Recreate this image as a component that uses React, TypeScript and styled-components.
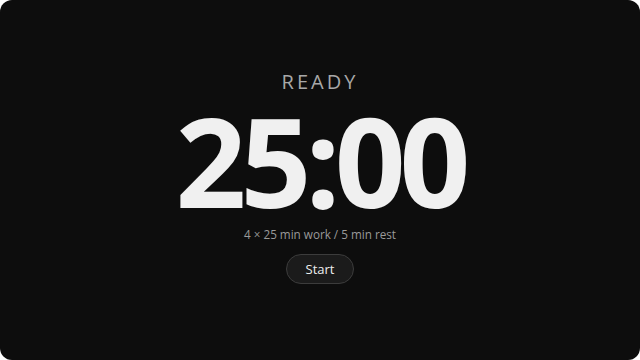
import React from "react";
import styled, { createGlobalStyle } from "styled-components";

const Global = createGlobalStyle`
  html, body { margin: 0; padding: 0; background: #ffffff; }
  #root { width: 640px; height: 360px; }
`;

const Frame = styled.div`
  width: 640px;
  height: 360px;
  background: #0d0d0d;
  border-radius: 12px;
  display: flex;
  flex-direction: column;
  align-items: center;
  justify-content: center;
  font-family: "Open Sans", "Liberation Sans", sans-serif;
  box-sizing: border-box;
  padding-bottom: 8px;
`;

const Status = styled.div`
  font-size: 20px;
  letter-spacing: 3px;
  color: #a8a8a8;
  line-height: 28px;
`;

const Clock = styled.div`
  font-size: 124px;
  font-weight: 700;
  color: #f0f0f0;
  line-height: 124px;
  letter-spacing: -6px;
  margin-top: 2px;
`;

const Plan = styled.div`
  font-size: 11.7px;
  color: #9a9a9a;
  margin-top: 3px;
  line-height: 18px;
`;

const Button = styled.button`
  margin-top: 11px;
  height: 30px;
  padding: 0 19px;
  border-radius: 15px;
  border: 1px solid #3c3c3c;
  background: #1b1b1b;
  color: #eeeeee;
  font-family: "Open Sans", "Liberation Sans", sans-serif;
  font-size: 13px;
  cursor: pointer;
`;

export default function App() {
  return (
    <>
      <Global />
      <Frame>
        <Status>READY</Status>
        <Clock>25:00</Clock>
        <Plan>4 × 25 min work / 5 min rest</Plan>
        <Button>Start</Button>
      </Frame>
    </>
  );
}
